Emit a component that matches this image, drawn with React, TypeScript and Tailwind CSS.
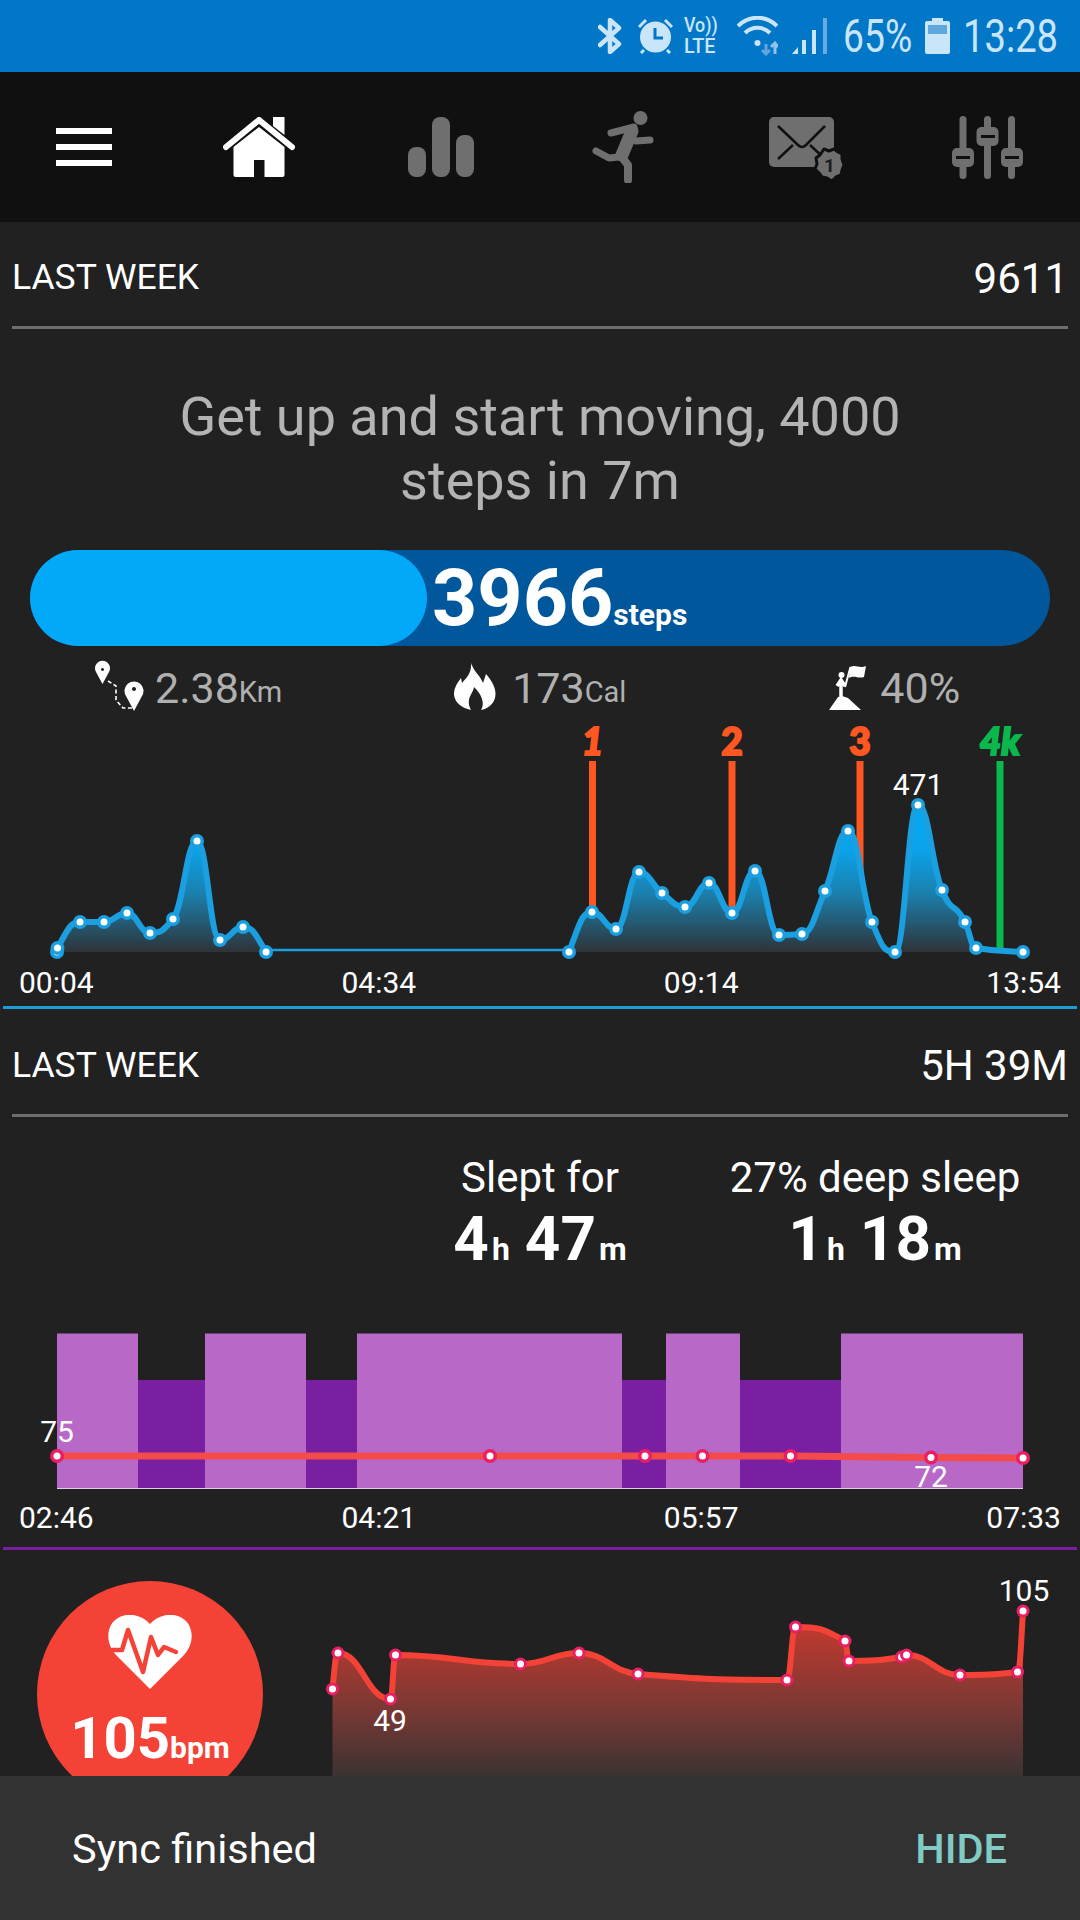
import React from "react";

type Pt = [number, number];

// same maths as a monotone-x curve, peaks stay on the data points
const sign = (n: number) => (n < 0 ? -1 : 1);
const monotonePath = (pts: Pt[]) => {
  const n = pts.length;
  const slopes: number[] = new Array(n).fill(0);
  for (let i = 1; i < n - 1; i++) {
    const h0 = pts[i][0] - pts[i - 1][0];
    const h1 = pts[i + 1][0] - pts[i][0];
    const s0 = (pts[i][1] - pts[i - 1][1]) / h0;
    const s1 = (pts[i + 1][1] - pts[i][1]) / h1;
    const p = (s0 * h1 + s1 * h0) / (h0 + h1);
    slopes[i] =
      (sign(s0) + sign(s1)) * Math.min(Math.abs(s0), Math.abs(s1), 0.5 * Math.abs(p));
  }
  slopes[0] = (3 * (pts[1][1] - pts[0][1])) / (pts[1][0] - pts[0][0]) / 2 - slopes[1] / 2;
  slopes[n - 1] =
    (3 * (pts[n - 1][1] - pts[n - 2][1])) / (pts[n - 1][0] - pts[n - 2][0]) / 2 - slopes[n - 2] / 2;
  let d = `M${pts[0][0]} ${pts[0][1]}`;
  for (let i = 1; i < n; i++) {
    // longer handles than d3 uses, the peaks in the app are rounder
    const dx = (pts[i][0] - pts[i - 1][0]) / 2.2;
    d += ` C${pts[i - 1][0] + dx} ${pts[i - 1][1] + dx * slopes[i - 1]} ${pts[i][0] - dx} ${
      pts[i][1] - dx * slopes[i]
    } ${pts[i][0]} ${pts[i][1]}`;
  }
  return d;
};

const stepsA: Pt[] = [
  [57, 952], [57.5, 948], [80, 922], [104, 922], [127, 913], [150, 933], [173, 919], [197, 841],
  [220, 940], [243, 927], [266, 952],
];
const stepsB: Pt[] = [
  [569, 952], [592, 912], [616, 929], [639, 872], [662, 893], [685, 907], [709, 883], [732, 913],
  [755, 871], [779, 935], [802, 934], [825, 891], [848, 831], [872, 922], [895, 952], [918, 805],
  [942, 890], [965, 922], [976, 948], [1023, 952],
];
const marks = [
  { x: 592.5, label: "1", italic: true },
  { x: 732, label: "2", italic: false },
  { x: 860, label: "3", italic: false },
];
const sleepBlocks = [
  { x: 57, w: 81, deep: false },
  { x: 138, w: 67, deep: true },
  { x: 205, w: 101, deep: false },
  { x: 306, w: 51, deep: true },
  { x: 357, w: 265, deep: false },
  { x: 622, w: 44, deep: true },
  { x: 666, w: 74, deep: false },
  { x: 740, w: 101, deep: true },
  { x: 841, w: 182, deep: false },
];
const sleepHr: Pt[] = [
  [57, 1456], [490, 1456], [645, 1456], [702.5, 1456], [790.5, 1456], [931, 1457.5], [1023, 1458],
];
const heart: Pt[] = [
  [332.5, 1689], [338, 1653], [390.5, 1699], [395.5, 1655], [520.5, 1664], [579, 1653], [638, 1674],
  [787, 1680], [795.5, 1627], [845, 1641], [849, 1661], [901.5, 1657], [906.5, 1655], [960, 1675],
  [1017.5, 1672], [1023, 1611],
];

const Dot = ({ p, ring, r = 7 }: { p: Pt; ring: string; r?: number }) => (
  <>
    <circle cx={p[0]} cy={p[1]} r={r} fill={ring} />
    <circle cx={p[0]} cy={p[1]} r={3.5} fill="#fff" />
  </>
);

const SectionHead = ({ value, h }: { value: string; h: string }) => (
  <div
    className={`mx-[12px] flex items-center justify-between border-b-[3px] border-[#6e6e6e] pt-[8px] text-white ${h}`}
  >
    <span className="text-[35.5px]">LAST WEEK</span>
    <span className="text-[42px]">{value}</span>
  </div>
);

const AxisRow = ({ labels, h }: { labels: string[]; h: string }) => (
  <div className={`flex items-center justify-between px-[19px] text-[30px] text-white ${h}`}>
    {labels.map((l) => (
      <span key={l}>{l}</span>
    ))}
  </div>
);

function StatusBar() {
  return (
    <div className="flex h-[72px] items-center justify-end bg-[#0277c8] pr-[22px] text-[#c9e5f9]">
      <svg width="24" height="36" viewBox="0 0 24 36" className="mr-[16px]" fill="none" stroke="#c9e5f9" strokeWidth="4.5">
        <path d="M2 9 L21 26 L12 34 V2 L21 10 L2 27" strokeLinejoin="round" strokeLinecap="round" />
      </svg>
      <svg width="35" height="36" viewBox="0 0 35 36" className="mr-[11px]">
        <circle cx="17.5" cy="19" r="15.5" fill="#c9e5f9" />
        <path d="M17 10 V20 H25" stroke="#0277c8" strokeWidth="3" fill="none" />
        <path d="M1 9 L8 2 M34 9 L27 2 M6 32 L3 35 M29 32 L32 35" stroke="#c9e5f9" strokeWidth="3" />
      </svg>
      <div className="mr-[16px] flex w-[37px] flex-col text-[21px] font-medium leading-[21px]">
        <span className="inline-block origin-left scale-x-[0.85] whitespace-nowrap">Vo))</span>
        <span className="inline-block origin-left scale-x-[0.94] whitespace-nowrap">LTE</span>
      </div>
      <svg width="41" height="40" viewBox="0 0 41 40" className="mr-[14px]" fill="none" stroke="#c9e5f9" strokeWidth="4">
        <path d="M1 10 C12 -1 29 -1 40 10" />
        <path d="M8 17 C15 10 26 10 33 17" />
        <circle cx="20.5" cy="27" r="3" fill="#c9e5f9" stroke="none" />
        <path d="M29 28 V38 M25 34 L29 38 L33 34" stroke="#5fa6dc" strokeWidth="3" />
        <path d="M38 38 V27 M34 31 L38 27 L41 31" stroke="#8fc3ea" strokeWidth="3" />
      </svg>
      <svg width="36" height="36" viewBox="0 0 36 36" className="mr-[15px]">
        <path d="M0 36 L6 29 V36Z" fill="#c9e5f9" />
        <rect x="10" y="22" width="4" height="14" fill="#c9e5f9" />
        <rect x="20" y="12" width="4" height="24" fill="#c9e5f9" />
        <rect x="31" y="0" width="4" height="36" fill="#67abdf" />
      </svg>
      <div className="mr-[13px] w-[69px] text-[46px] leading-none">
        <span className="inline-block origin-left scale-x-[0.81] whitespace-nowrap">65%</span>
      </div>
      <svg width="25" height="36" viewBox="0 0 25 36" className="mr-[13px]">
        <path d="M7 0 H18 V3 H23 Q25 3 25 5 V34 Q25 36 23 36 H2 Q0 36 0 34 V5 Q0 3 2 3 H7Z" fill="#c9e5f9" />
        <rect x="3" y="7" width="19" height="9" fill="#5fa6dc" />
      </svg>
      <div className="w-[95px] text-[46px] leading-none">
        <span className="inline-block origin-left scale-x-[0.83] whitespace-nowrap">13:28</span>
      </div>
    </div>
  );
}

function NavBar() {
  return (
    <div className="flex h-[150px] items-center bg-[#101010] pl-[56px]">
      <div className="flex w-[56px] flex-col gap-[10px]">
        <span className="h-[6px] bg-white" />
        <span className="h-[6px] bg-white" />
        <span className="h-[6px] bg-white" />
      </div>
      <svg width="72" height="60" viewBox="0 0 72 60" className="ml-[111px]">
        <path d="M50 0 H61.5 V18 L50 9Z" fill="#fff" />
        <path d="M3 30 L36 3 L69 30" fill="none" stroke="#fff" strokeWidth="6" strokeLinecap="round" />
        <path d="M10.5 30 L36 10 L61.5 30 V58 Q61.5 60 59.5 60 H41.5 V43 H31 V60 H12.5 Q10.5 60 10.5 58Z" fill="#fff" />
      </svg>
      <div className="ml-[113px] flex h-[60px] items-end gap-[6px]">
        <span className="h-[30px] w-[18px] rounded-[8px] bg-[#6f6f6f]" />
        <span className="h-[60px] w-[18px] rounded-[8px] bg-[#6f6f6f]" />
        <span className="h-[42px] w-[18px] rounded-[8px] bg-[#6f6f6f]" />
      </div>
      <svg width="62" height="72" viewBox="0 0 62 72" className="ml-[118px]" fill="none" stroke="#6f6f6f" strokeLinecap="round" strokeLinejoin="round">
        <circle cx="48.5" cy="7" r="7" fill="#6f6f6f" stroke="none" />
        <path d="M19 22 L42 16" strokeWidth="7" />
        <path d="M40 20 L30 44" strokeWidth="13" />
        <path d="M44 30 L58 29" strokeWidth="7" />
        <path d="M27 46 L17 47 L4 40" strokeWidth="7" />
        <path d="M28 44 L36 54 V69" strokeWidth="8" />
      </svg>
      <svg width="74" height="72" viewBox="0 0 74 72" className="ml-[115px] mt-[12px] overflow-visible">
        <rect x="0" y="0" width="65" height="50" rx="5" fill="#6f6f6f" />
        <path d="M9 9 L29 28 Q33 32 37 28 L56 9 M9 42 L24 28 M41 28 L56 42" fill="none" stroke="#101010" strokeWidth="2.5" />
        <path
          d="M55 32 L60 34 L65 32 L69 35 L73 37 L73 42 L75 48 L73 53 L72 58 L67 60 L63 64 L58 61 L53 60 L50 56 L46 52 L48 47 L47 41 L51 38Z"
          fill="#6f6f6f"
          stroke="#101010"
          strokeWidth="3"
          strokeLinejoin="round"
        />
        <text x="60.5" y="55" textAnchor="middle" className="fill-[#1c1c1c] text-[19px] font-bold">
          1
        </text>
      </svg>
      <svg width="71" height="63" viewBox="0 0 71 63" className="ml-[109px]">
        <g fill="#6f6f6f">
          <rect x="7.5" y="0" width="7" height="63" rx="3.5" />
          <rect x="32" y="0" width="7" height="63" rx="3.5" />
          <rect x="56" y="0" width="7" height="63" rx="3.5" />
          <rect x="0" y="32" width="22" height="19" rx="5" />
          <rect x="24.5" y="11" width="22" height="19" rx="5" />
          <rect x="49" y="32" width="22" height="19" rx="5" />
        </g>
        <g fill="#101010">
          <rect x="4" y="40" width="14" height="3" />
          <rect x="29" y="19" width="14" height="3" />
          <rect x="53" y="40" width="14" height="3" />
        </g>
      </svg>
    </div>
  );
}

function StatsRow() {
  return (
    <div className="mt-[16px] flex h-[48px] items-center pl-[93px] text-[#b0b0b0]">
      <svg width="52" height="52" viewBox="0 0 52 52" className="mr-[10px] shrink-0">
        <path d="M15 21 L23 26 V40 L30 48 H40" fill="none" stroke="#fff" strokeWidth="1.6" strokeDasharray="4 2.5" />
        <path fillRule="evenodd" d="M9.5 24 L3 12 A7.5 7.5 0 1 1 16 12Z M9.5 8 a1.5 1.5 0 1 0 .01 0Z" fill="#fff" />
        <path fillRule="evenodd" d="M41 51 L33 36 A9.5 9.5 0 1 1 49 36Z M41 27 a2 2 0 1 0 .01 0Z" fill="#fff" />
      </svg>
      <span className="mt-[5px] text-[43px]">2.38</span>
      <span className="mt-[13px] text-[29px]">Km</span>
      <svg width="42" height="47" viewBox="0 0 42 47" className="ml-[172px] mr-[16px] shrink-0">
        <path
          d="M17 0 C20 9 26 12 29 20 L32 11 C39 19 43 27 41 35 C39 42 33 46 27 47 C31 40 28 32 20 24 C19 31 11 36 17 47 C8 45 1 40 0 32 C-0.5 26 3 20 7 15 L8 20 C12 15 18 10 17 0Z"
          fill="#fff"
        />
      </svg>
      <span className="mt-[5px] text-[43px]">173</span>
      <span className="mt-[13px] text-[29px]">Cal</span>
      <svg width="42" height="48" viewBox="0 0 42 48" className="ml-[203px] mr-[9px] shrink-0">
        <path d="M0 48 L9 35 L13 34 L19 36 L32 48Z" fill="#fff" />
        <circle cx="12.5" cy="13" r="3" fill="#fff" />
        <path d="M12 17 V35 M8 24 L12 18 L16 24" fill="none" stroke="#fff" strokeWidth="3.5" />
        <path d="M16 25 L21.5 5" stroke="#fff" strokeWidth="2" />
        <path d="M21 5 C27 2 30 7 37 4 L35 15 C29 17 26 13 20 16Z" fill="#fff" />
      </svg>
      <span className="mt-[5px] text-[43px]">40%</span>
    </div>
  );
}

function StepsChart() {
  return (
    <svg width="1080" height="254" viewBox="0 710 1080 254" className="block">
      <defs>
        <linearGradient id="stepsFill" gradientUnits="userSpaceOnUse" x1="0" y1="805" x2="0" y2="952">
          <stop offset="0" stopColor="#03a9f4" />
          <stop offset="0.3" stopColor="#0aa3ea" />
          <stop offset="0.6" stopColor="#1b80ad" />
          <stop offset="1" stopColor="#2e3338" />
        </linearGradient>
      </defs>
      {marks.map((m) => (
        <g key={m.label}>
          <rect x={m.x - 3.5} y="761" width="7" height="185" fill="#ff5722" />
          <text
            x={m.x}
            y="755"
            textAnchor="middle"
            stroke="#ff5722"
            strokeWidth="2"
            className={`fill-[#ff5722] font-['Lato',sans-serif] text-[37px] font-black ${m.italic ? "italic" : ""}`}
          >
            {m.label}
          </text>
        </g>
      ))}
      <rect x="996.5" y="761" width="7" height="188" fill="#0bb84d" />
      <text
        x="1000"
        y="755"
        textAnchor="middle"
        stroke="#0bb84d"
        strokeWidth="2"
        className="fill-[#0bb84d] font-['Lato',sans-serif] text-[37px] font-black italic"
      >
        4k
      </text>
      <path d={`${monotonePath(stepsA.slice(1))} V952 H57.5Z`} fill="url(#stepsFill)" />
      <path d={`${monotonePath(stepsB)} V952 H569Z`} fill="url(#stepsFill)" />
      <path d="M266 950 H569" stroke="#1a9fe0" strokeWidth="2.5" />
      <path d={monotonePath(stepsA.slice(1))} fill="none" stroke="#1a9fe0" strokeWidth="6" />
      <path d={monotonePath(stepsB)} fill="none" stroke="#1a9fe0" strokeWidth="6" />
      {[...stepsA, ...stepsB].map((p) => (
        <Dot key={p.join()} p={p} ring="#1a9fe0" />
      ))}
      <text x="918" y="795" textAnchor="middle" className="fill-white text-[30px]">
        471
      </text>
    </svg>
  );
}

function SleepChart() {
  return (
    <svg width="1080" height="179" viewBox="0 1320 1080 179" className="block">
      {sleepBlocks.map((b) => (
        <rect
          key={b.x}
          x={b.x}
          y={b.deep ? 1380 : 1333.5}
          width={b.w}
          height={b.deep ? 108 : 154.5}
          fill={b.deep ? "#7b1fa2" : "#b868c6"}
        />
      ))}
      <rect x="57" y="1488" width="966" height="1" fill="#e3cdea" />
      <polyline points={sleepHr.map((p) => p.join(",")).join(" ")} fill="none" stroke="#f44a4a" strokeWidth="7" />
      {sleepHr.map((p) => (
        <Dot key={p[0]} p={p} ring="#e91e63" />
      ))}
      <text x="57" y="1442" textAnchor="middle" className="fill-white text-[30px]">
        75
      </text>
      <text x="931" y="1487" textAnchor="middle" className="fill-white text-[30px]">
        72
      </text>
    </svg>
  );
}

function HeartChart() {
  return (
    <svg width="780" height="226" viewBox="300 1550 780 226" className="block">
      <defs>
        <linearGradient id="heartFill" gradientUnits="userSpaceOnUse" x1="0" y1="1627" x2="0" y2="1776">
          <stop offset="0" stopColor="#c0392f" />
          <stop offset="0.55" stopColor="#7a3833" />
          <stop offset="1" stopColor="#3b3333" />
        </linearGradient>
      </defs>
      <path d={`${monotonePath(heart)} V1776 H332.5Z`} fill="url(#heartFill)" />
      <path d={monotonePath(heart)} fill="none" stroke="#f44336" strokeWidth="6" />
      {heart.map((p) => (
        <Dot key={p[0]} p={p} ring="#e91e63" r={6.5} />
      ))}
      <text x="390" y="1731" textAnchor="middle" className="fill-white text-[30px]">
        49
      </text>
      <text x="1024" y="1601" textAnchor="middle" className="fill-white text-[30px]">
        105
      </text>
    </svg>
  );
}

const Duration = ({ a, b }: { a: string; b: string }) => (
  <div className="flex h-[70px] items-baseline justify-center font-bold leading-[70px] text-white">
    <span className="text-[62px]">{a}</span>
    <span className="ml-[3px] mr-[15px] text-[32px]">h</span>
    <span className="text-[62px]">{b}</span>
    <span className="ml-[3px] text-[32px]">m</span>
  </div>
);

export default function App() {
  return (
    <div className="relative flex h-[1920px] w-[1080px] flex-col overflow-hidden bg-[#212121] font-['Roboto',sans-serif]">
      <StatusBar />
      <NavBar />

      <SectionHead value="9611" h="h-[107px]" />
      <p className="mt-[56px] text-center text-[54px] leading-[64px] text-[#b4b4b4]">
        Get up and start moving, 4000
        <br />
        steps in 7m
      </p>
      <div className="mx-[30px] mt-[37px] flex h-[96px] items-center rounded-full bg-[#01579b]">
        <div className="h-full w-[397px] rounded-full bg-[#03a9f9]" />
        <div className="ml-[5px] flex items-baseline font-bold text-white">
          <span className="text-[79px] leading-[96px]">3966</span>
          <span className="text-[30px]">steps</span>
        </div>
      </div>
      <StatsRow />
      <StepsChart />
      <AxisRow labels={["00:04", "04:34", "09:14", "13:54"]} h="h-[36px]" />
      <div className="mx-[3px] mt-[6px] h-[3px] bg-[#1e9ad6]" />

      <SectionHead value="5H 39M" h="h-[108px]" />
      <div className="mt-[37px] grid grid-cols-[370px_340px_330px]">
        <div />
        <div>
          <div className="text-center text-[42px] leading-[48px] text-white">Slept for</div>
          <div className="mt-[2px]">
            <Duration a="4" b="47" />
          </div>
        </div>
        <div>
          <div className="text-center text-[42px] leading-[48px] text-white">27% deep sleep</div>
          <div className="mt-[2px]">
            <Duration a="1" b="18" />
          </div>
        </div>
      </div>
      <div className="mt-[46px]">
        <SleepChart />
      </div>
      <AxisRow labels={["02:46", "04:21", "05:57", "07:33"]} h="h-[36px]" />
      <div className="mx-[3px] mt-[12px] h-[3px] bg-[#7b1fa2]" />

      <div className="flex h-[226px] shrink-0 overflow-hidden">
        <div className="ml-[37px] mt-[31px] flex h-[226px] w-[226px] shrink-0 flex-col items-center rounded-full bg-[#f44336] pt-[34px] text-white">
          <svg width="84" height="74" viewBox="0 0 84 74" className="shrink-0">
            <path
              d="M42 74 L8 40 C-3 28 -2 10 10 3 C20 -3 34 0 42 9 C50 0 64 -3 74 3 C86 10 87 28 76 40Z"
              fill="#fff"
            />
            <path d="M4 35 H14 L20 15 L35 57 L43 22 L50 40 L56 32 L68 37" fill="none" stroke="#f44336" strokeWidth="4.5" strokeLinejoin="round" strokeLinecap="round" />
          </svg>
          <div className="mt-[19px] flex items-baseline font-bold leading-[60px]">
            <span className="text-[58px]">105</span>
            <span className="text-[30px]">bpm</span>
          </div>
        </div>
        <div className="ml-[37px]">
          <HeartChart />
        </div>
      </div>

      <div className="absolute inset-x-0 bottom-0 flex h-[144px] items-center justify-between bg-[#323232] pl-[72px] pr-[73px] pt-[3px] text-[41.5px]">
        <span className="text-white">Sync finished</span>
        <span className="font-medium text-[#80cbc4]">HIDE</span>
      </div>
    </div>
  );
}
